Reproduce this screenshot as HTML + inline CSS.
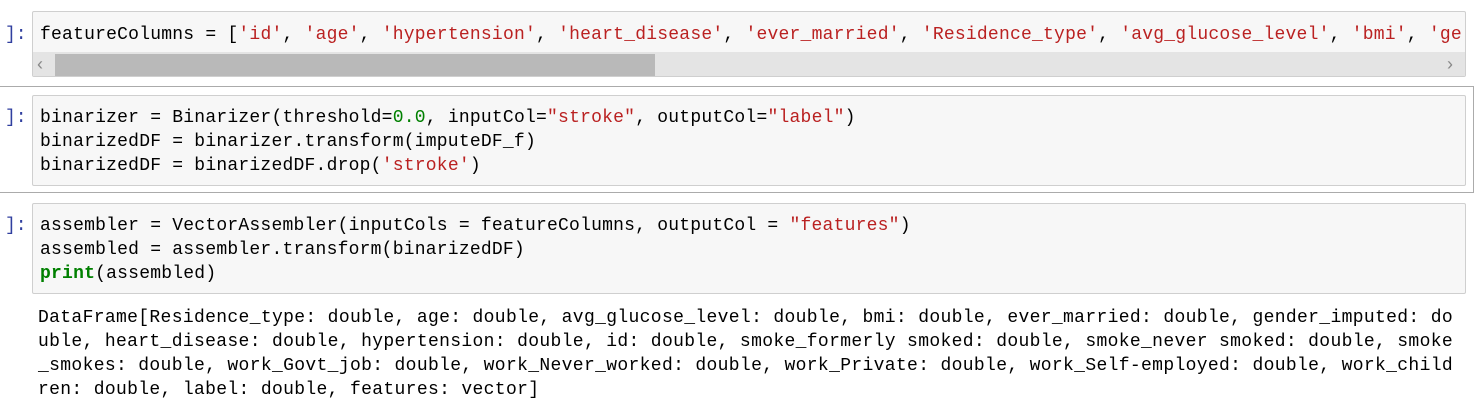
<!DOCTYPE html>
<html><head><style>
body{margin:0;width:1479px;height:416px;background:#fff;position:relative;overflow:hidden;font-family:"Liberation Mono",monospace;}
.a{position:absolute}
.box{position:absolute;left:32px;width:1432px;background:#f7f7f7;border:1px solid #cfcfcf;border-radius:2px}
.code{position:absolute;left:40px;font-size:18px;line-height:24px;letter-spacing:0.22px;color:#000;white-space:pre}
.out{position:absolute;left:38px;font-size:18px;line-height:24px;letter-spacing:0.34px;color:#000;white-space:pre}
.s{color:#ba2121}.n{color:#008000}.k{color:#008000;font-weight:bold}
.p{position:absolute;left:5px;color:#303f9f;font-size:18px;line-height:24px;font-family:"Liberation Mono",monospace}
</style></head><body>
<div class="p" style="top:23px">]:</div>
<div class="box" style="top:11px;height:64px;overflow:hidden">
 <div class="a" style="left:0;top:40px;width:1432px;height:24px;background:#e4e4e4"></div>
 <div class="a" style="left:22px;top:42px;width:600px;height:22px;background:#b9b9b9"></div>
 <div class="a" style="left:4px;top:40px;color:#888;font:18px 'Liberation Sans',sans-serif;line-height:24px">&lsaquo;</div>
 <div class="a" style="left:1414px;top:40px;color:#888;font:18px 'Liberation Sans',sans-serif;line-height:24px">&rsaquo;</div>
</div>
<div class="code" style="top:23px">featureColumns = [<span class="s">'id'</span>, <span class="s">'age'</span>, <span class="s">'hypertension'</span>, <span class="s">'heart_disease'</span>, <span class="s">'ever_married'</span>, <span class="s">'Residence_type'</span>, <span class="s">'avg_glucose_level'</span>, <span class="s">'bmi'</span>, <span class="s">'ge</span></div>

<div class="a" style="left:-2px;top:86px;width:1474px;height:105px;border:1px solid #ababab"></div>
<div class="p" style="top:106px">]:</div>
<div class="box" style="top:95px;height:89px"></div>
<div class="code" style="top:106px">binarizer = Binarizer(threshold=<span class="n">0.0</span>, inputCol=<span class="s">"stroke"</span>, outputCol=<span class="s">"label"</span>)
binarizedDF = binarizer.transform(imputeDF_f)
binarizedDF = binarizedDF.drop(<span class="s">'stroke'</span>)</div>

<div class="p" style="top:214px">]:</div>
<div class="box" style="top:203px;height:89px"></div>
<div class="code" style="top:214px">assembler = VectorAssembler(inputCols = featureColumns, outputCol = <span class="s">"features"</span>)
assembled = assembler.transform(binarizedDF)
<span class="k">print</span>(assembled)</div>

<div class="out" style="top:306px">DataFrame[Residence_type: double, age: double, avg_glucose_level: double, bmi: double, ever_married: double, gender_imputed: do
uble, heart_disease: double, hypertension: double, id: double, smoke_formerly smoked: double, smoke_never smoked: double, smoke
_smokes: double, work_Govt_job: double, work_Never_worked: double, work_Private: double, work_Self-employed: double, work_child
ren: double, label: double, features: vector]</div>
</body></html>
